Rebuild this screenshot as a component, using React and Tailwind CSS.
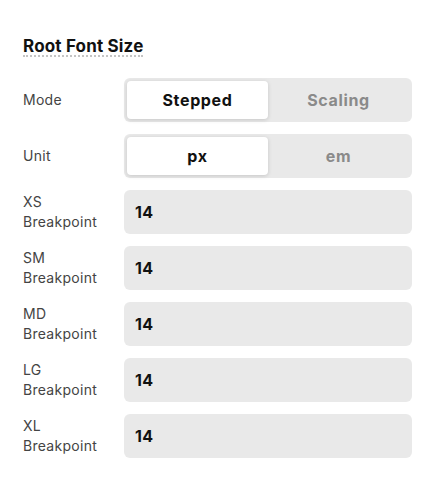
const font = { fontFamily: 'Inter, "Noto Sans", sans-serif' }

function Segmented({ options, active }) {
  return (
    <div className="flex h-[44px] w-[288px] rounded-[6px] bg-[#e9e9e9] p-[3px]">
      {options.map((opt) => (
        <div
          key={opt}
          className={
            opt === active
              ? 'flex flex-1 items-center justify-center rounded-[4px] bg-white text-[16px] font-bold tracking-[0.04em] text-[#111] shadow-[0_1px_4px_rgba(0,0,0,0.15)]'
              : 'flex flex-1 items-center justify-center text-[16px] font-bold tracking-[0.04em] text-[#8a8a8a]'
          }
        >
          {opt}
        </div>
      ))}
    </div>
  )
}

function Row({ label, children }) {
  return (
    <div className="flex items-center">
      <div className="w-[101px] text-[14px] leading-[20px] tracking-[0.02em] text-[#444]">{label}</div>
      {children}
    </div>
  )
}

const breakpoints = ['XS', 'SM', 'MD', 'LG', 'XL']

export default function App() {
  return (
    <div className="min-h-[500px] w-[436px] bg-white pl-[23px] pt-[34px]" style={font}>
      <div className="mb-[20px]">
        <div className="inline-block border-b-2 border-dotted border-[#c4c4c4] text-[17px] font-bold leading-[17px] tracking-[0.01em] text-[#111]">
          Root Font Size
        </div>
      </div>
      <div className="flex flex-col gap-[12px]">
        <Row label="Mode">
          <Segmented options={['Stepped', 'Scaling']} active="Stepped" />
        </Row>
        <Row label="Unit">
          <Segmented options={['px', 'em']} active="px" />
        </Row>
        {breakpoints.map((bp) => (
          <Row key={bp} label={<>{bp}<br />Breakpoint</>}>
            <div className="flex h-[44px] w-[288px] items-center rounded-[6px] bg-[#e9e9e9] px-[11px] text-[16px] font-bold tracking-[0.02em] text-[#111]">
              14
            </div>
          </Row>
        ))}
      </div>
    </div>
  )
}
